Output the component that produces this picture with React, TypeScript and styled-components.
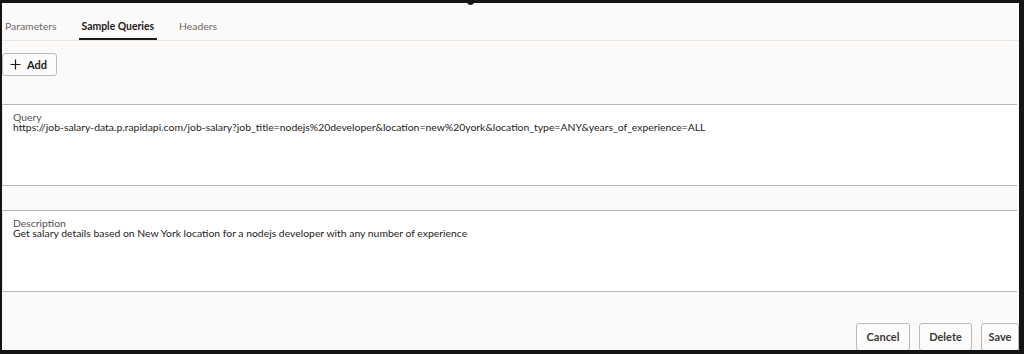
import React from 'react';
import styled, { createGlobalStyle } from 'styled-components';

const GlobalStyle = createGlobalStyle`
  html, body {
    margin: 0;
    padding: 0;
    background: #141414;
  }
  body {
    font-family: Lato, 'Noto Sans', 'Liberation Sans', sans-serif;
    color: #2b2926;
  }
`;

const Frame = styled.div`
  position: relative;
  margin: 3px 5px 0 2px;
  height: 347px;
  background: #fcfaf9;
  display: flex;
  flex-direction: column;
  overflow: hidden;
  & > * {
    flex-shrink: 0;
  }
`;

const Notch = styled.span`
  position: absolute;
  top: -3px;
  left: 465px;
  width: 7px;
  height: 5px;
  border-radius: 0 0 4px 4px;
  background: #141414;
`;

const TabBar = styled.div`
  display: flex;
  align-items: flex-end;
  gap: 19px;
  height: 37px;
  border-bottom: 1px solid #e7e4e2;
`;

const Tab = styled.div<{ $active?: boolean }>`
  padding: 0 3px 6px;
  font-size: 10.4px;
  font-weight: ${(p) => (p.$active ? 700 : 400)};
  color: ${(p) => (p.$active ? '#1d1b19' : '#6b6865')};
  border-bottom: 2px solid ${(p) => (p.$active ? '#1d1b19' : 'transparent')};
`;

const Toolbar = styled.div`
  padding-top: 12px;
`;

const AddButton = styled.button`
  display: flex;
  align-items: center;
  gap: 6px;
  height: 23px;
  width: 55px;
  padding: 0 7px;
  background: #fdfcfc;
  border: 1px solid #bdbab7;
  border-radius: 3px;
  font-family: inherit;
  font-size: 11px;
  font-weight: 700;
  color: #1d1b19;
`;

const FieldBox = styled.div<{ $gap: number }>`
  margin-top: ${(p) => p.$gap}px;
  margin-right: 2px;
  height: 82px;
  box-sizing: border-box;
  padding: 7px 10px 0;
  background: #ffffff;
  border-top: 1px solid #b9b6b3;
  border-bottom: 1px solid #b9b6b3;
  border-left: 1px solid #e3e0dd;
`;

const Label = styled.div`
  font-size: 10.4px;
  line-height: 10px;
  color: #55524f;
`;

const Value = styled.div`
  font-size: 10.4px;
  line-height: 11px;
  color: #252321;
  white-space: nowrap;
`;

const Footer = styled.div`
  display: flex;
  justify-content: flex-end;
  gap: 9px;
  margin-top: 31px;
`;

const ActionButton = styled.button<{ $w: number }>`
  flex: none;
  width: ${(p) => p.$w}px;
  height: 28px;
  padding: 0 0 2px;
  background: #fdfcfc;
  border: 1px solid #bdbab7;
  border-radius: 3px;
  font-family: inherit;
  font-size: 11px;
  font-weight: 700;
  color: #3a3835;
`;

const Plus = () => (
  <svg width="11" height="11" viewBox="0 0 11 11">
    <path d="M5.5 0.5v10M0.5 5.5h10" stroke="#1d1b19" strokeWidth="1.2" />
  </svg>
);

const fields = [
  {
    label: 'Query',
    value:
      'https://job-salary-data.p.rapidapi.com/job-salary?job_title=nodejs%20developer&location=new%20york&location_type=ANY&years_of_experience=ALL',
    gap: 28,
  },
  {
    label: 'Description',
    value:
      'Get salary details based on New York location for a nodejs developer with any number of experience',
    gap: 24,
  },
];

const actions = [
  { label: 'Cancel', width: 54 },
  { label: 'Delete', width: 53 },
  { label: 'Save', width: 38 },
];

const App = () => (
  <>
    <GlobalStyle />
    <Frame>
      <Notch />
      <TabBar>
        <Tab>Parameters</Tab>
        <Tab $active>Sample Queries</Tab>
        <Tab>Headers</Tab>
      </TabBar>
      <Toolbar>
        <AddButton>
          <Plus />
          Add
        </AddButton>
      </Toolbar>
      {fields.map((f) => (
        <FieldBox key={f.label} $gap={f.gap}>
          <Label>{f.label}</Label>
          <Value>{f.value}</Value>
        </FieldBox>
      ))}
      <Footer>
        {actions.map((a) => (
          <ActionButton key={a.label} $w={a.width}>
            {a.label}
          </ActionButton>
        ))}
      </Footer>
    </Frame>
  </>
);

export default App;
